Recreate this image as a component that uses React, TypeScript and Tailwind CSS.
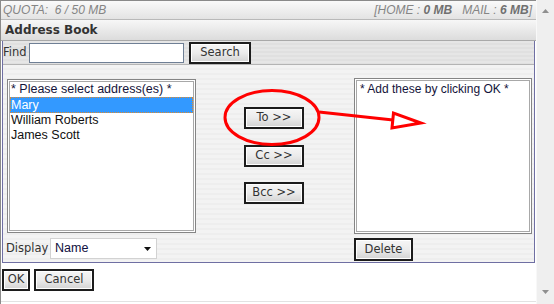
import React from "react";

const btn =
  "flex items-center justify-center border-2 border-[#1c1c1c] bg-linear-to-b from-[#f6f6f6] via-[#ebebeb] to-[#d3d3d3] shadow-[inset_0_0_0_1px_#ffffff] text-[11.5px] text-[#333] font-['DejaVu_Sans',Tahoma,sans-serif] leading-none";

function ListBox({ children, className }: { children: React.ReactNode; className: string }) {
  return (
    <div className={`border border-[#858585] bg-white p-[1px] ${className}`}>
      <div className="h-full w-full border border-[#a8a8a8] bg-white">{children}</div>
    </div>
  );
}

export default function App() {
  return (
    <div className="relative w-[554px] h-[304px] flex bg-white overflow-hidden">
      <div className="w-[536px] h-full flex flex-col border-l border-t border-[#8a8a8a]">
        {/* quota bar */}
        <div className="h-[19px] shrink-0 flex items-center justify-between pl-[2px] pr-[4px] border-b border-[#b9b9b9] bg-linear-to-b from-[#fafafa] to-[#e3e3e3] italic text-[12px] text-[#858585] font-['Liberation_Sans',Arial,sans-serif]">
          <span>QUOTA:&nbsp; 6 / 50 MB</span>
          <span>
            [HOME : <b className="text-[#707070]">0 MB</b>&nbsp;&nbsp; MAIL : <b className="text-[#707070]">6 MB</b>]
          </span>
        </div>
        {/* title bar */}
        <div className="h-[21px] shrink-0 flex items-center pl-[4px] border-b border-[#a9a9a9] bg-linear-to-b from-[#f7f7f7] to-[#dcdcdc] font-bold text-[12px] text-[#333] font-['DejaVu_Sans',Tahoma,sans-serif]">
          Address Book
        </div>
        {/* panel */}
        <div className="ml-[1px] w-[533px] h-[222px] shrink-0 flex flex-col border-l border-r border-b border-[#6f6fa3]">
          {/* find row */}
          <div className="h-[24px] shrink-0 flex items-center border-b border-[#b4b4b4] bg-[repeating-linear-gradient(180deg,#e6e6e6_0px,#e6e6e6_2px,#e0e0e0_2px,#e0e0e0_4px)]">
            <span className="w-[26px] text-[11.5px] text-[#333] font-['DejaVu_Sans',Tahoma,sans-serif]">Find</span>
            <div className="w-[155px] h-[20px] border border-[#6f7f95] bg-white" />
            <div className={`${btn} ml-[5px] w-[62px] h-[22px]`}>Search</div>
          </div>
          {/* body */}
          <div className="flex-1 flex bg-[repeating-linear-gradient(180deg,#f3f3f3_0px,#f3f3f3_3px,#eeeeee_3px,#eeeeee_5px)]">
            {/* left column */}
            <div className="w-[193px] pl-[3px] flex flex-col">
              <ListBox className="ml-[1px] mt-[14px] w-[189px] h-[154px]">
                <div className="text-[12.5px] leading-[15px] text-[#14143a] font-['Liberation_Sans',Arial,sans-serif]">
                  <div className="h-[15px] pl-[1px]">* Please select address(es) *</div>
                  <div className="h-[16px] bg-[#3399ff] text-white border border-dotted border-[#e08a2c] leading-[14px]">Mary</div>
                  <div className="h-[15px] pl-[1px] text-[#111]">William Roberts</div>
                  <div className="h-[15px] pl-[1px] text-[#111]">James Scott</div>
                </div>
              </ListBox>
              <div className="mt-[5px] flex items-center">
                <span className="w-[44px] text-[11.5px] text-[#333] font-['DejaVu_Sans',Tahoma,sans-serif]">Display</span>
                <div className="w-[107px] h-[21px] border border-[#d2d2d2] bg-white flex items-center justify-between pl-[4px] pr-[5px]">
                  <span className="text-[12.5px] text-[#101040] font-['Liberation_Sans',Arial,sans-serif]">Name</span>
                  <svg width="7" height="4" viewBox="0 0 7 4">
                    <polygon points="0,0 7,0 3.5,4" fill="#111" />
                  </svg>
                </div>
              </div>
            </div>
            {/* middle column */}
            <div className="w-[158px] pl-[48px] flex flex-col">
              <div className={`${btn} mt-[42px] w-[60px] h-[22px]`}>To &gt;&gt;</div>
              <div className={`${btn} mt-[16px] w-[60px] h-[22px]`}>Cc &gt;&gt;</div>
              <div className={`${btn} mt-[15px] w-[60px] h-[22px]`}>Bcc &gt;&gt;</div>
            </div>
            {/* right column */}
            <div className="flex flex-col">
              <ListBox className="mt-[13px] w-[178px] h-[156px]">
                <div className="pl-[3px] pt-[1px] text-[12px] leading-[15px] text-[#14143a] font-['Liberation_Sans',Arial,sans-serif]">
                  * Add these by clicking OK *
                </div>
              </ListBox>
              <div className={`${btn} mt-[4px] w-[59px] h-[23px]`}>Delete</div>
            </div>
          </div>
        </div>
        {/* bottom buttons */}
        <div className="mt-[6px] ml-[1px] flex">
          <div className={`${btn} w-[28px] h-[22px]`}>OK</div>
          <div className={`${btn} ml-[4px] w-[60px] h-[22px]`}>Cancel</div>
        </div>
        <div className="flex-1" />
        <div className="h-[1px] bg-[#e2e2e2] mb-[2px]" />
      </div>
      {/* scrollbar */}
      <div className="w-[18px] h-full bg-[#efefef] border-l border-[#f8f8f8] flex flex-col items-center justify-between pt-[9px] pb-[10px]">
        <svg width="7" height="4" viewBox="0 0 7 4">
          <polygon points="0,4 7,4 3.5,0" fill="#8f8f8f" />
        </svg>
        <svg width="7" height="4" viewBox="0 0 7 4">
          <polygon points="0,0 7,0 3.5,4" fill="#8f8f8f" />
        </svg>
      </div>
      {/* red annotation */}
      <svg className="absolute left-0 top-0 pointer-events-none" width="554" height="304" viewBox="0 0 554 304">
        <ellipse cx="272" cy="117.5" rx="47" ry="27" fill="none" stroke="#ff0000" strokeWidth="3" />
        <line x1="319" y1="112" x2="393" y2="120" stroke="#ff0000" strokeWidth="3" />
        <polygon points="393.5,113 392,128 421,123" fill="none" stroke="#ff0000" strokeWidth="3" strokeLinejoin="miter" />
      </svg>
    </div>
  );
}
